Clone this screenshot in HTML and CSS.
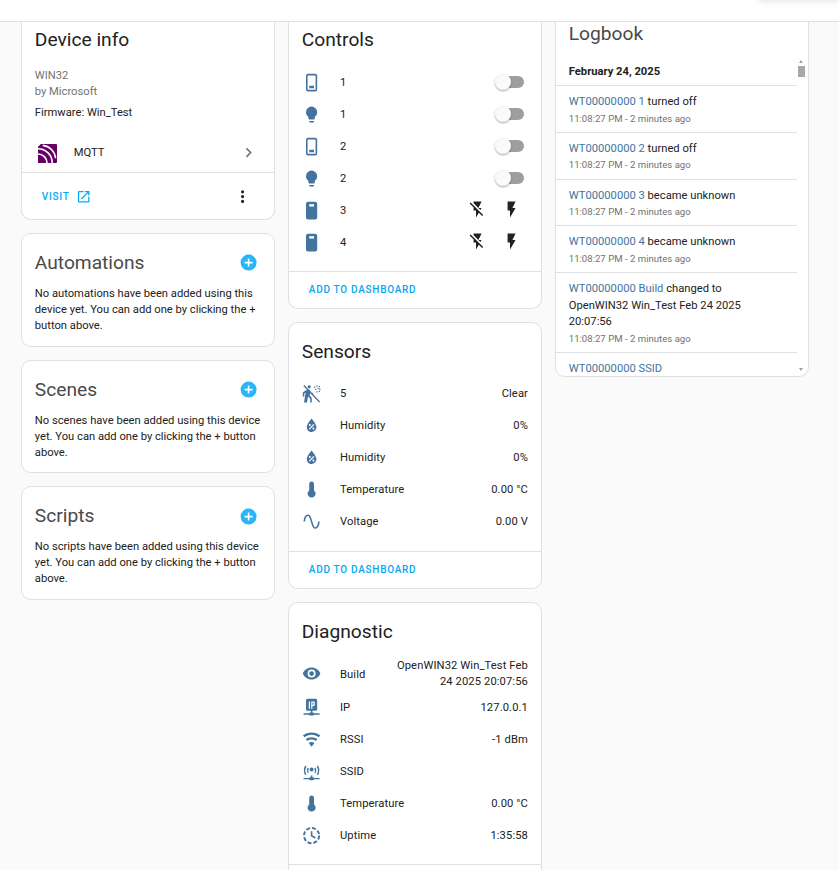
FILE: index.html
```html
<!DOCTYPE html>
<html lang="en">
<head>
<meta charset="utf-8">
<title>Device</title>
<link rel="stylesheet" href="styles.css">
</head>
<body>
<header class="topbar"><span class="menu-shadow"></span></header>
<main class="columns">
  <section class="col col-first">
    <article class="card info-card">
      <h2 class="title">Device info</h2>
      <div class="info-body">
        <div class="muted">WIN32</div>
        <div class="muted">by Microsoft</div>
        <div class="firmware">Firmware: Win_Test</div>
      </div>
      <div class="integration">
        <svg class="mqtt" viewBox="0 0 20 20"><path d="M3 0h16a1 1 0 0 1 1 1v18a1 1 0 0 1-1 1H0V3z" fill="#660066"/><g fill="none" stroke="#fff" stroke-width="1.7"><path d="M0 10.500a9.500 9.500 0 0 1 9.500 9.500"/><path d="M0 5a15 15 0 0 1 15 15"/><path d="M5 1.500a15 15 0 0 1 13.500 13.500"/></g></svg>
        <span class="integration-name">MQTT</span>
        <svg class="icon chevron" viewBox="0 0 24 24"><path d="M8.59,16.58L13.17,12L8.59,7.41L10,6L16,12L10,18L8.59,16.58Z"/></svg>
      </div>
      <div class="actions">
        <span class="button-text">VISIT</span>
        <svg class="visit-icon" viewBox="0 0 24 24"><path d="M14,3V5H17.59L7.76,14.83L9.17,16.24L19,6.41V10H21V3M19,19H5V5H12V3H5C3.89,3 3,3.9 3,5V19A2,2 0 0,0 5,21H19A2,2 0 0,0 21,19V12H19V19Z"/></svg>
        <svg class="icon dots" viewBox="0 0 24 24"><path d="M12,16A2,2 0 0,1 14,18A2,2 0 0,1 12,20A2,2 0 0,1 10,18A2,2 0 0,1 12,16M12,10A2,2 0 0,1 14,12A2,2 0 0,1 12,14A2,2 0 0,1 10,12A2,2 0 0,1 12,10M12,4A2,2 0 0,1 14,6A2,2 0 0,1 12,8A2,2 0 0,1 10,6A2,2 0 0,1 12,4Z"/></svg>
      </div>
    </article>

    <article class="card empty-card">
      <div class="empty-head"><h2 class="title title-grey">Automations</h2>
        <svg class="icon plus" viewBox="0 0 24 24"><path d="M17,13H13V17H11V13H7V11H11V7H13V11H17M12,2A10,10 0 0,0 2,12A10,10 0 0,0 12,22A10,10 0 0,0 22,12A10,10 0 0,0 12,2Z"/></svg></div>
      <p class="empty-text">No automations have been added using this device yet. You can add one by clicking the + button above.</p>
    </article>
    <article class="card empty-card">
      <div class="empty-head"><h2 class="title title-grey">Scenes</h2>
        <svg class="icon plus" viewBox="0 0 24 24"><path d="M17,13H13V17H11V13H7V11H11V7H13V11H17M12,2A10,10 0 0,0 2,12A10,10 0 0,0 12,22A10,10 0 0,0 22,12A10,10 0 0,0 12,2Z"/></svg></div>
      <p class="empty-text">No scenes have been added using this device yet. You can add one by clicking the + button above.</p>
    </article>
    <article class="card empty-card">
      <div class="empty-head"><h2 class="title title-grey">Scripts</h2>
        <svg class="icon plus" viewBox="0 0 24 24"><path d="M17,13H13V17H11V13H7V11H11V7H13V11H17M12,2A10,10 0 0,0 2,12A10,10 0 0,0 12,22A10,10 0 0,0 22,12A10,10 0 0,0 12,2Z"/></svg></div>
      <p class="empty-text">No scripts have been added using this device yet. You can add one by clicking the + button above.</p>
    </article>
  </section>

  <section class="col col-first">
    <article class="card">
      <h2 class="title">Controls</h2>
      <div class="rows">
        <div class="row"><svg class="icon ha" viewBox="0 0 24 24"><path fill-rule="evenodd" d="M7.500 1h9A2.500 2.500 0 0 1 19 3.500v17a2.500 2.500 0 0 1-2.500 2.500h-9A2.500 2.500 0 0 1 5 20.500v-17A2.500 2.500 0 0 1 7.500 1zm0 2a.5.5 0 0 0-.5.5v17a.5.5 0 0 0 .5.5h9a.5.5 0 0 0 .5-.5v-17a.5.5 0 0 0-.5-.5zM9 16h6v3H9z"/></svg><span class="name">1</span><span class="switch"><span class="thumb"></span></span></div>
        <div class="row"><svg class="icon ha" viewBox="0 0 24 24"><path d="M12,2A7,7 0 0,0 5,9C5,11.38 6.19,13.47 8,14.74V17A1,1 0 0,0 9,18H15A1,1 0 0,0 16,17V14.74C17.81,13.47 19,11.38 19,9A7,7 0 0,0 12,2M9,21A1,1 0 0,0 10,22H14A1,1 0 0,0 15,21V20H9V21Z"/></svg><span class="name">1</span><span class="switch"><span class="thumb"></span></span></div>
        <div class="row"><svg class="icon ha" viewBox="0 0 24 24"><path fill-rule="evenodd" d="M7.500 1h9A2.500 2.500 0 0 1 19 3.500v17a2.500 2.500 0 0 1-2.500 2.500h-9A2.500 2.500 0 0 1 5 20.500v-17A2.500 2.500 0 0 1 7.500 1zm0 2a.5.5 0 0 0-.5.5v17a.5.5 0 0 0 .5.5h9a.5.5 0 0 0 .5-.5v-17a.5.5 0 0 0-.5-.5zM9 16h6v3H9z"/></svg><span class="name">2</span><span class="switch"><span class="thumb"></span></span></div>
        <div class="row"><svg class="icon ha" viewBox="0 0 24 24"><path d="M12,2A7,7 0 0,0 5,9C5,11.38 6.19,13.47 8,14.74V17A1,1 0 0,0 9,18H15A1,1 0 0,0 16,17V14.74C17.81,13.47 19,11.38 19,9A7,7 0 0,0 12,2M9,21A1,1 0 0,0 10,22H14A1,1 0 0,0 15,21V20H9V21Z"/></svg><span class="name">2</span><span class="switch"><span class="thumb"></span></span></div>
        <div class="row"><svg class="icon ha" viewBox="0 0 24 24"><path fill-rule="evenodd" d="M7.500 1h9A2.500 2.500 0 0 1 19 3.500v17a2.500 2.500 0 0 1-2.500 2.500h-9A2.500 2.500 0 0 1 5 20.500v-17A2.500 2.500 0 0 1 7.500 1zM9 4v3h6V4z"/></svg><span class="name">3</span><span class="flashes"><svg class="icon flash" viewBox="0 0 24 24"><path d="M17,10H13L17,2H7V4.18L15.46,12.64M3.27,3L2,4.27L7,9.27V13H10V22L13.58,15.86L17.73,20L19,18.73L3.27,3Z"/></svg><svg class="icon flash" viewBox="0 0 24 24"><path d="M7,2V13H10V22L17,10H13L17,2H7Z"/></svg></span></div>
        <div class="row"><svg class="icon ha" viewBox="0 0 24 24"><path fill-rule="evenodd" d="M7.500 1h9A2.500 2.500 0 0 1 19 3.500v17a2.500 2.500 0 0 1-2.500 2.500h-9A2.500 2.500 0 0 1 5 20.500v-17A2.500 2.500 0 0 1 7.500 1zM9 4v3h6V4z"/></svg><span class="name">4</span><span class="flashes"><svg class="icon flash" viewBox="0 0 24 24"><path d="M17,10H13L17,2H7V4.18L15.46,12.64M3.27,3L2,4.27L7,9.27V13H10V22L13.58,15.86L17.73,20L19,18.73L3.27,3Z"/></svg><svg class="icon flash" viewBox="0 0 24 24"><path d="M7,2V13H10V22L17,10H13L17,2H7Z"/></svg></span></div>
      </div>
      <div class="card-foot"><span class="button-text">ADD TO DASHBOARD</span></div>
    </article>

    <article class="card">
      <h2 class="title title-sub">Sensors</h2>
      <div class="rows rows-sensors">
        <div class="row"><svg class="icon ha" viewBox="0 0 24 24"><path d="M9 5.500a2 2 0 1 1 .01 0zM4.500 8l4.500-1.500 2.500 3.800 2.800 1.400-.9 1.500-3.200-1.700-.7 3 2.700 2.700V23h-2v-5l-2.700-2.500-1.200 7.500H2.500L4.500 11l-1.600.9V15.500H1V10.500zM1.700 2.400l1.200-1.200L22.600 21.800l-1.200 1.200z"/><path d="M15 3h1.600v1.600H15zM18 1.500h1.600v1.600H18zM21 2.500h1.600v1.600H21zM16.500 6h1.600v1.600h-1.600zM19.500 4.800h1.600v1.600h-1.600zM21.500 6h1.600v1.600h-1.600zM18 9h1.600v1.600H18zM21 8.500h1.600v1.600H21z"/></svg><span class="name">5</span><span class="value">Clear</span></div>
        <div class="row"><svg class="icon ha" viewBox="0 0 24 24"><path d="M12,3.250C12,3.250 6,10 6,14C6,17.320 8.690,20 12,20A6,6 0 0,0 18,14C18,10 12,3.250 12,3.250M14.470,9.970L15.530,11.030L9.530,17.030L8.470,15.970M9.750,10A1.250,1.250 0 0,1 11,11.250A1.250,1.250 0 0,1 9.750,12.500A1.250,1.250 0 0,1 8.500,11.250A1.250,1.250 0 0,1 9.750,10M14.250,14.500A1.250,1.250 0 0,1 15.500,15.750A1.250,1.250 0 0,1 14.250,17A1.250,1.250 0 0,1 13,15.750A1.250,1.250 0 0,1 14.250,14.500Z"/></svg><span class="name">Humidity</span><span class="value">0%</span></div>
        <div class="row"><svg class="icon ha" viewBox="0 0 24 24"><path d="M12,3.250C12,3.250 6,10 6,14C6,17.320 8.690,20 12,20A6,6 0 0,0 18,14C18,10 12,3.250 12,3.250M14.470,9.970L15.530,11.030L9.530,17.030L8.470,15.970M9.750,10A1.250,1.250 0 0,1 11,11.250A1.250,1.250 0 0,1 9.750,12.500A1.250,1.250 0 0,1 8.500,11.250A1.250,1.250 0 0,1 9.750,10M14.250,14.500A1.250,1.250 0 0,1 15.500,15.750A1.250,1.250 0 0,1 14.250,17A1.250,1.250 0 0,1 13,15.750A1.250,1.250 0 0,1 14.250,14.500Z"/></svg><span class="name">Humidity</span><span class="value">0%</span></div>
        <div class="row"><svg class="icon ha" viewBox="0 0 24 24"><path d="M15 13V5A3 3 0 0 0 9 5V13A5 5 0 1 0 15 13Z"/></svg><span class="name">Temperature</span><span class="value">0.00 °C</span></div>
        <div class="row"><svg class="icon ha" viewBox="0 0 24 24"><path d="M16.500,21C13.500,21 12.310,16.760 11.050,12.280C10.140,9.040 9,5 7.500,5C4.110,5 4,11.930 4,12H2C2,11.630 2.060,3 7.500,3C10.500,3 11.710,7.250 12.970,11.740C13.830,14.800 15,19 16.500,19C19.940,19 20.030,12.070 20.030,12H22.030C22.030,12.370 21.970,21 16.500,21Z"/></svg><span class="name">Voltage</span><span class="value">0.00 V</span></div>
      </div>
      <div class="card-foot"><span class="button-text">ADD TO DASHBOARD</span></div>
    </article>

    <article class="card">
      <h2 class="title title-sub">Diagnostic</h2>
      <div class="rows rows-diag">
        <div class="row row-tall"><svg class="icon ha" viewBox="0 0 24 24"><path d="M12,9A3,3 0 0,0 9,12A3,3 0 0,0 12,15A3,3 0 0,0 15,12A3,3 0 0,0 12,9M12,17A5,5 0 0,1 7,12A5,5 0 0,1 12,7A5,5 0 0,1 17,12A5,5 0 0,1 12,17M12,4.500C7,4.500 2.730,7.610 1,12C2.730,16.390 7,19.500 12,19.500C17,19.500 21.270,16.390 23,12C21.270,7.610 17,4.500 12,4.500Z"/></svg><span class="name name-low">Build</span><span class="value value-wrap">OpenWIN32 Win_Test Feb 24 2025 20:07:56</span></div>
        <div class="row"><svg class="icon ha" viewBox="0 0 24 24"><path fill-rule="evenodd" d="M7 1h10a2 2 0 0 1 2 2v11a2 2 0 0 1-2 2h-4v2h1a1 1 0 0 1 1 1h7v2h-7a1 1 0 0 1-1 1h-4a1 1 0 0 1-1-1H2v-2h7a1 1 0 0 1 1-1h1v-2H7a2 2 0 0 1-2-2V3a2 2 0 0 1 2-2zm1.500 3.500v9H10v-9zm3 0v9H13V10h1.500A1.500 1.500 0 0 0 16 8.500V6a1.500 1.500 0 0 0-1.500-1.500zM13 6h1.500v2.500H13z"/></svg><span class="name">IP</span><span class="value">127.0.0.1</span></div>
        <div class="row"><svg class="icon ha" viewBox="0 0 24 24"><path d="M12,21L15.600,16.200C14.600,15.450 13.350,15 12,15C10.650,15 9.400,15.450 8.400,16.200L12,21M12,3C7.950,3 4.210,4.340 1.200,6.600L3,9C5.500,7.120 8.620,6 12,6C15.380,6 18.500,7.120 21,9L22.800,6.600C19.790,4.340 16.050,3 12,3M12,9C9.300,9 6.810,9.890 4.800,11.400L6.600,13.800C8.100,12.670 9.970,12 12,12C14.030,12 15.900,12.670 17.400,13.800L19.200,11.400C17.190,9.890 14.700,9 12,9Z"/></svg><span class="name">RSSI</span><span class="value">-1 dBm</span></div>
        <div class="row"><svg class="icon ha" viewBox="0 0 24 24"><path d="M11 17h2v2h1a1 1 0 0 1 1 1h7v1.700h-7a1 1 0 0 1-1 1h-4a1 1 0 0 1-1-1H2V20h7a1 1 0 0 1 1-1h1zM12 7a2.500 2.500 0 1 1-.01 0z"/><g class="waves"><path d="M7.800 13.500a6 6 0 0 1 0-6M16.200 7.500a6 6 0 0 1 0 6M4.800 16a11 11 0 0 1 0-11M19.200 5a11 11 0 0 1 0 11"/></g></svg><span class="name">SSID</span></div>
        <div class="row"><svg class="icon ha" viewBox="0 0 24 24"><path d="M15 13V5A3 3 0 0 0 9 5V13A5 5 0 1 0 15 13Z"/></svg><span class="name">Temperature</span><span class="value">0.00 °C</span></div>
        <div class="row"><svg class="icon ha" viewBox="0 0 24 24"><path d="M11 6.500h2v5.200l4.200 2.500-1 1.700-5.200-3.200z"/><circle class="dashed" cx="12" cy="12" r="9.500"/></svg><span class="name">Uptime</span><span class="value">1:35:58</span></div>
      </div>
      <div class="card-foot"></div>
    </article>
  </section>

  <section class="col">
    <article class="card log-card">
      <h2 class="title log-title">Logbook</h2>
      <div class="log-date">February 24, 2025</div>
      <div class="entry"><div class="msg"><span class="link">WT00000000 1</span> turned off</div><div class="time">11:08:27 PM - 2 minutes ago</div></div>
      <div class="entry"><div class="msg"><span class="link">WT00000000 2</span> turned off</div><div class="time">11:08:27 PM - 2 minutes ago</div></div>
      <div class="entry"><div class="msg"><span class="link">WT00000000 3</span> became unknown</div><div class="time">11:08:27 PM - 2 minutes ago</div></div>
      <div class="entry"><div class="msg"><span class="link">WT00000000 4</span> became unknown</div><div class="time">11:08:27 PM - 2 minutes ago</div></div>
      <div class="entry"><div class="msg"><span class="link">WT00000000 Build</span> changed to<br>OpenWIN32 Win_Test Feb 24 2025<br>20:07:56</div><div class="time">11:08:27 PM - 2 minutes ago</div></div>
      <div class="entry"><div class="msg"><span class="link">WT00000000 SSID</span></div></div>
      <div class="scrollbar"><span class="arrow-up"></span><span class="scroll-thumb"></span><span class="arrow-down"></span></div>
    </article>
  </section>
</main>
</body>
</html>
```

FILE: styles.css
```css
* { box-sizing: border-box; }
html, body { margin: 0; height: 870px; overflow: hidden; }
body {
  background: #fafafa;
  color: #212121;
  font-family: Roboto, "Liberation Sans", sans-serif;
  font-size: 11.2px;
  line-height: 16px;
}
.topbar {
  position: relative;
  z-index: 2;
  height: 22px;
  background: #fff;
  border-bottom: 1px solid #e0e0e0;
  overflow: hidden;
}
.menu-shadow {
  position: absolute;
  top: -12px;
  right: 0;
  width: 80px;
  height: 12px;
  box-shadow: 0 1px 6px rgba(0,0,0,.12);
}
.columns {
  display: flex;
  align-items: flex-start;
  gap: 12.8px;
  padding-left: 20.8px;
}
.col {
  display: flex;
  flex-direction: column;
  gap: 13px;
  width: 254.2px;
  flex: none;
}
.card {
  background: #fff;
  border: 1px solid #e0e0e0;
  border-radius: 10px;
  overflow: hidden;
}
.col-first { margin-top: -10px; }
.col-first .card:first-child { border-top: 0; padding-top: 15px; }

.title {
  margin: 0;
  font-size: 19.2px;
  font-weight: 400;
  line-height: 26px;
  padding-left: 13px;
  color: #212121;
}
.title-grey { color: #4a4a4a; padding-left: 0; }
.title-sub { padding-top: 15.5px; }

/* Device info */
.info-card { height: 208px; display: flex; flex-direction: column; }
.info-body { padding: 15px 13px 0; }
.muted { color: #727272; }
.firmware { margin-top: 5px; }
.integration {
  display: flex;
  align-items: center;
  height: 32px;
  margin-top: 16px;
  padding: 0 16px 0 16px;
}
.mqtt { width: 19px; height: 19px; flex: none; }
.integration-name { margin-left: 17px; flex: 1; }
.chevron { fill: #727272; }
.actions {
  display: flex;
  align-items: center;
  margin-top: auto;
  height: 47px;
  border-top: 1px solid #e0e0e0;
  padding: 1px 22px 0 20px;
}
.button-text {
  color: #03a9f4;
  font-size: 10px;
  font-weight: 500;
  letter-spacing: 0.72px;
}
.visit-icon { width: 15.4px; height: 15.4px; fill: #03a9f4; margin-left: 6px; }
.dots { margin-left: auto; fill: #212121; }
.icon { width: 19.2px; height: 19.2px; flex: none; display: block; }

/* Empty cards */
.empty-card { height: 113.6px; padding: 16px 13px 0; }
.empty-head { display: flex; align-items: center; justify-content: space-between; }
.plus { fill: #29b6f6; margin-right: 3px; }
.empty-text { margin: 10px 0 0; }

/* Entity rows */
.rows { padding: 14px 13px 12px; }
.rows-sensors { padding-top: 13.5px; padding-bottom: 13px; }
.rows-diag { padding-top: 11px; padding-bottom: 12px; }
.row { display: flex; align-items: center; height: 32px; letter-spacing: .1px; }
.row-tall { height: 36px; }
.name-low { padding-top: 2px; }
.ha { fill: #44739e; }
.waves path { fill: none; stroke: #44739e; stroke-width: 1.9; }
.dashed { fill: none; stroke: #44739e; stroke-width: 2.4; stroke-dasharray: 5 2.500; }
.name { margin-left: 19px; flex: 1; }
.value { text-align: right; }
.value-wrap { width: 135px; flex: none; }
.switch {
  position: relative;
  width: 22px;
  height: 12px;
  margin: 0 4px 2px 0;
  background: #9e9e9e;
  border-radius: 6px;
}
.thumb {
  position: absolute;
  left: -7px;
  top: -2px;
  width: 16px;
  height: 16px;
  border-radius: 50%;
  background: #fafafa;
  box-shadow: 0 1px 2px rgba(0,0,0,.35);
}
.flashes { display: flex; gap: 15.6px; margin: 0 6.4px 2px 0; }
.flash { fill: #212121; }
.card-foot {
  height: 37px;
  padding: 0 20px;
  border-top: 1px solid #e0e0e0;
  display: flex;
  align-items: center;
}

/* Logbook */
.log-card { position: relative; height: 377px; margin-top: -22px; padding-top: 20px; }
.log-title { color: #4a4a4a; }
.log-date {
  font-weight: 700;
  margin: 17px 0 0 13px;
  padding-bottom: 5px;
  width: 228px;
}
.entry { width: 241px; padding: 8px 13px 5px; border-top: 1px solid #e0e0e0; }
.msg { line-height: 16.6px; }
.link { color: #44739e; }
.time { color: #727272; font-size: 9.6px; line-height: 16.2px; }
.scrollbar {
  position: absolute;
  top: 59px;
  right: 1px;
  width: 11px;
  bottom: 0;
}
.arrow-up, .arrow-down {
  position: absolute;
  left: 3px;
  border-left: 2.500px solid transparent;
  border-right: 2.500px solid transparent;
}
.arrow-up { top: 0; border-bottom: 3px solid #a0a0a0; }
.arrow-down { bottom: 5px; border-top: 3px solid #a0a0a0; }
.scroll-thumb { position: absolute; left: 2px; top: 6px; width: 7px; height: 11px; background: #a8a8a8; }
```
